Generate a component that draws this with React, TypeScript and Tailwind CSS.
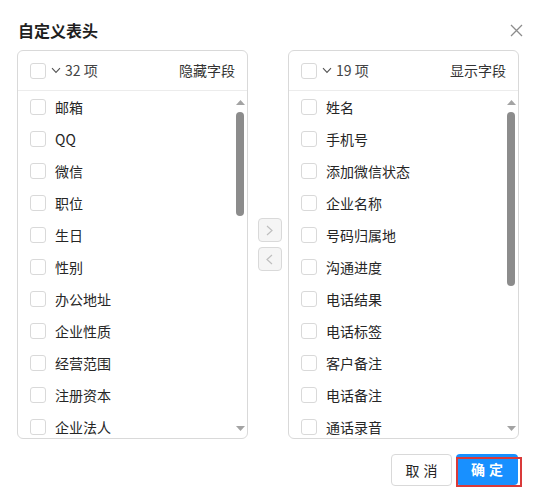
import React from "react";

const hidden = ["邮箱", "QQ", "微信", "职位", "生日", "性别", "办公地址", "企业性质", "经营范围", "注册资本", "企业法人"];
const shown = ["姓名", "手机号", "添加微信状态", "企业名称", "号码归属地", "沟通进度", "电话结果", "电话标签", "客户备注", "电话备注", "通话录音"];

function Checkbox() {
  return <span className="block h-4 w-4 shrink-0 rounded-[3px] border border-[#d9d9d9] bg-white" />;
}

function Scrollbar({ thumb }: { thumb: number }) {
  return (
    <div className="flex w-[14px] shrink-0 flex-col items-center pt-[9px] pb-[7px]">
      <svg width="9" height="5" viewBox="0 0 9 5" className="shrink-0">
        <path d="M4.5 0L9 5H0z" fill="#a3a3a3" />
      </svg>
      <div className="mt-[7px] w-[8px] shrink-0 rounded-full bg-[#8c8c8c]" style={{ height: thumb }} />
      <div className="flex-1" />
      <svg width="9" height="5" viewBox="0 0 9 5" className="shrink-0">
        <path d="M0 0H9L4.5 5z" fill="#a3a3a3" />
      </svg>
    </div>
  );
}

function Panel({ count, title, items, thumb }: { count: number; title: string; items: string[]; thumb: number }) {
  return (
    <div className="flex h-[389px] w-[231px] flex-col overflow-hidden rounded-[6px] border border-[#d9d9d9]">
      <div className="flex h-[40px] shrink-0 items-center border-b border-[#ececec] pl-3 pr-3">
        <Checkbox />
        <svg width="10" height="7" viewBox="0 0 10 7" className="ml-[5px]">
          <path d="M1 1.2L5 5.4L9 1.2" stroke="#555" strokeWidth="1.1" fill="none" />
        </svg>
        <span className="ml-[4px] text-[14px] text-[#444]">{count} 项</span>
        <span className="ml-auto text-[14px] text-[#333]">{title}</span>
      </div>
      <div className="flex min-h-0 flex-1">
        <div className="min-w-0 flex-1 overflow-hidden pb-[2px]">
          {items.map((t) => (
            <div key={t} className="flex h-[32px] items-center pl-3">
              <Checkbox />
              <span className="ml-[9px] text-[14px] leading-[20px] text-[#262626]">{t}</span>
            </div>
          ))}
        </div>
        <Scrollbar thumb={thumb} />
      </div>
    </div>
  );
}

function ArrowButton({ dir }: { dir: "right" | "left" }) {
  return (
    <div className="flex h-[24px] w-[24px] items-center justify-center rounded-[4px] border border-[#d9d9d9] bg-[#f5f5f5]">
      <svg width="7" height="11" viewBox="0 0 7 11">
        <path d={dir === "right" ? "M1 1L6 5.5L1 10" : "M6 1L1 5.5L6 10"} stroke="#bfbfbf" strokeWidth="1.2" fill="none" />
      </svg>
    </div>
  );
}

export default function App() {
  return (
    <div
      className="h-[500px] w-[542px] bg-white px-[17px] pt-[18px]"
      style={{ fontFamily: '"Noto Sans CJK SC", "Noto Sans", sans-serif' }}
    >
      <div className="flex h-[24px] items-center">
        <h2 className="pl-[1px] text-[16px] font-bold text-[#1f1f1f]">自定义表头</h2>
        <svg width="13" height="13" viewBox="0 0 13 13" className="ml-auto mr-[2px]">
          <path d="M1 1L12 12M12 1L1 12" stroke="#8c8c8c" strokeWidth="1.3" />
        </svg>
      </div>
      <div className="mt-[8px] flex items-center">
        <Panel count={32} title="隐藏字段" items={hidden} thumb={104} />
        <div className="flex w-[40px] flex-col items-center gap-[5px] pl-[3px]">
          <ArrowButton dir="right" />
          <ArrowButton dir="left" />
        </div>
        <Panel count={19} title="显示字段" items={shown} thumb={174} />
      </div>
      <div className="mt-[15px] flex justify-end pr-[7px]">
        <button className="h-[32px] w-[61px] rounded-[4px] border border-[#d9d9d9] bg-white text-[14px] tracking-[4px] text-[#262626]">
          <span className="pl-[4px]">取消</span>
        </button>
        <div className="relative ml-[4px]">
          <button className="h-[31px] w-[62px] rounded-[4px] bg-[#1890ff] text-[14px] font-bold tracking-[4px] text-white">
            <span className="pl-[4px]">确定</span>
          </button>
          <div className="absolute left-0 top-[3px] h-[30px] w-[66px] border-2 border-[#d93a3a]" />
        </div>
      </div>
    </div>
  );
}
